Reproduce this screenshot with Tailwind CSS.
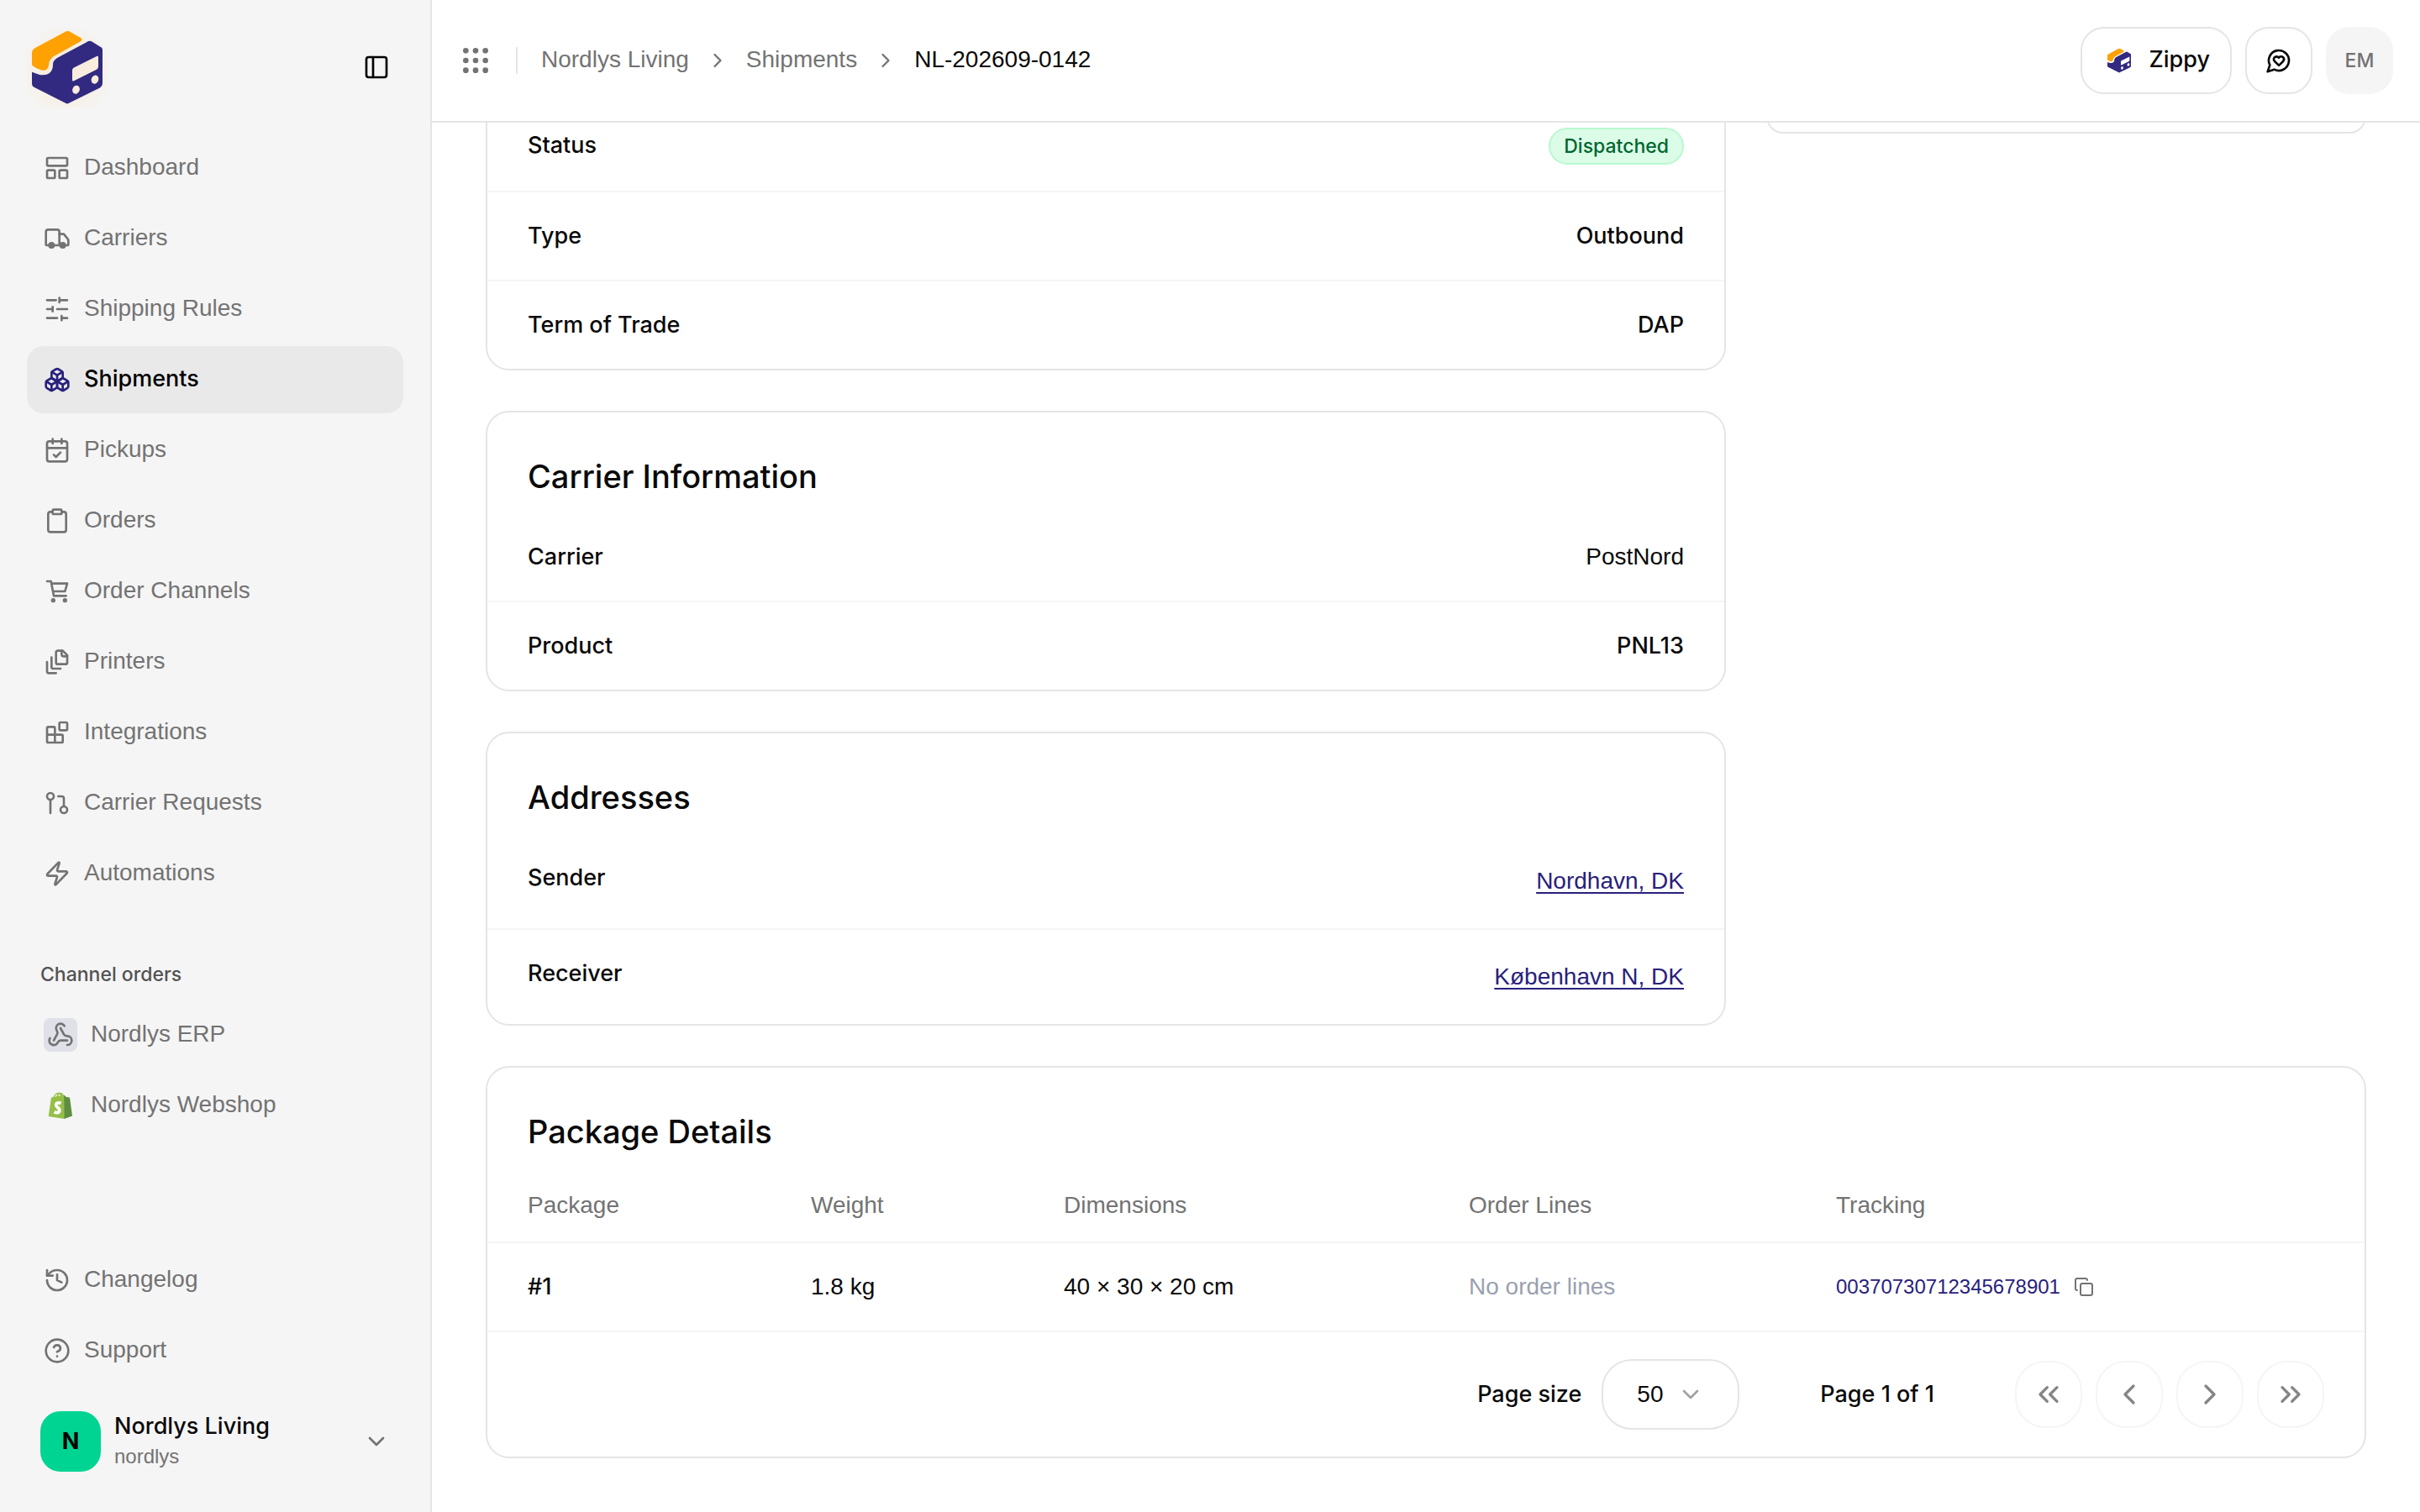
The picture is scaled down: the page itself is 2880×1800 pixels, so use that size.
<!DOCTYPE html>
<html lang="en">
<head>
    <meta charset="UTF-8">
    <meta name="viewport" content="width=device-width, initial-scale=1.0">
    <title>NL-202609-0142</title>
    <script src="https://cdn.jsdelivr.net/npm/@tailwindcss/browser@4"></script>
</head>
<body class="flex h-screen overflow-hidden bg-white font-['Liberation_Sans',Arial,sans-serif] text-[28px] leading-[40px] text-neutral-950">

    <!-- Icon and logo sprites -->
    <svg class="hidden" aria-hidden="true">
        <symbol id="logo" viewBox="0 0 96 96">
            <g transform="translate(0 .5) scale(1 1.045)">
                <path fill="#ffa100" d="M6 29Q6 26 9 24L44 6Q48 3 52 5.500L64 12Q67 14 64 16L32 33Q26 37 26 43Q25 50 18 49Q15 48 12 47L7 44Q6 43 6 42Z"/>
                <path fill="#312a80" d="M71 17Q74 15 77 16L87 22Q90 23 90 26V64Q90 67 87 69L51 86Q48 88 45 86L8 68Q6 67 6 64V51L15 54Q31 56 31 42Q31 38 36 35Z"/>
                <g fill="currentColor">
                    <path d="M54 49Q54 47 56 46L83 33Q85 32 85 34V45Q85 47 83 48L56 61Q54 62 54 60Z"/>
                    <ellipse cx="58.500" cy="71" rx="4.200" ry="5" transform="rotate(28 58.500 71)"/>
                    <ellipse cx="81" cy="59.500" rx="4.200" ry="5" transform="rotate(28 81 59.500)"/>
                </g>
            </g>
        </symbol>
        <symbol id="chevron-right" viewBox="0 0 24 24"><path d="m9 18 6-6-6-6"/></symbol>
        <symbol id="chevron-down" viewBox="0 0 24 24"><path d="m6 9 6 6 6-6"/></symbol>
    </svg>

    <!-- Sidebar -->
    <aside class="flex w-[514px] shrink-0 flex-col border-r-2 border-neutral-200 bg-neutral-100 p-8 text-neutral-500">
        <div class="flex items-center justify-between pr-4">
            <a href="#" aria-label="Home" class="size-24 bg-[radial-gradient(circle_at_50%_55%,#f7ecdd_30%,#f5f5f5_80%)] text-[#f7ecdd]"><svg class="size-full"><use href="#logo"/></svg></a>
            <button aria-label="Toggle sidebar" class="text-black">
                <svg class="size-8" viewBox="0 0 24 24" fill="none" stroke="currentColor" stroke-width="2" stroke-linecap="round" stroke-linejoin="round"><rect width="18" height="18" x="3" y="3" rx="2"/><path d="M9 3v18"/></svg>
            </button>
        </div>

        <nav class="mt-8 flex flex-col gap-1">
            <a href="#" class="flex h-20 items-center gap-4 rounded-[20px] px-5">
                <svg class="size-8" viewBox="0 0 24 24" fill="none" stroke="currentColor" stroke-width="2" stroke-linecap="round" stroke-linejoin="round"><rect width="18" height="7" x="3" y="3" rx="1"/><rect width="7" height="7" x="3" y="14" rx="1"/><rect width="7" height="7" x="14" y="14" rx="1"/></svg>
                <span class="pb-0.5">Dashboard</span>
            </a>
            <a href="#" class="flex h-20 items-center gap-4 rounded-[20px] px-5">
                <svg class="size-8" viewBox="0 0 24 24" fill="none" stroke="currentColor" stroke-width="2" stroke-linecap="round" stroke-linejoin="round"><path d="M14 18V6a2 2 0 0 0-2-2H4a2 2 0 0 0-2 2v11a1 1 0 0 0 1 1h2"/><path d="M15 18H9"/><path d="M19 18h2a1 1 0 0 0 1-1v-3.650a1 1 0 0 0-.22-.624l-3.480-4.350A1 1 0 0 0 17.520 8H14"/><circle cx="17" cy="18" r="2" fill="currentColor"/><circle cx="7" cy="18" r="2" fill="currentColor"/></svg>
                <span class="pb-0.5">Carriers</span>
            </a>
            <a href="#" class="flex h-20 items-center gap-4 rounded-[20px] px-5">
                <svg class="size-8" viewBox="0 0 24 24" fill="none" stroke="currentColor" stroke-width="2" stroke-linecap="round" stroke-linejoin="round"><path d="M3 4h8M14 4h7M14 2v4M3 12h5M8 10v4M12 12h9M3 20h9M16 18v4M16 20h5"/></svg>
                <span class="pb-0.5">Shipping Rules</span>
            </a>
            <a href="#" aria-current="page" class="flex h-20 items-center gap-4 rounded-[20px] bg-[#e9e9e9] px-5 text-black">
                <svg class="size-8 text-[#28217c]" viewBox="0 0 24 24" fill="none" stroke="currentColor" stroke-width="2" stroke-linecap="round" stroke-linejoin="round"><path d="M2.970 12.920A2 2 0 0 0 2 14.630v3.240a2 2 0 0 0 .97 1.710l3 1.800a2 2 0 0 0 2.060 0L12 19v-5.500l-5-3-4.030 2.420Z"/><path d="m7 16.500-4.740-2.850"/><path d="m7 16.500 5-3"/><path d="M7 16.500v5.170"/><path d="M12 13.500V19l3.970 2.380a2 2 0 0 0 2.060 0l3-1.800a2 2 0 0 0 .97-1.710v-3.240a2 2 0 0 0-.97-1.710L17 10.500l-5 3Z"/><path d="m17 16.500-5-3"/><path d="m17 16.500 4.740-2.850"/><path d="M17 16.500v5.170"/><path d="M7.970 4.420A2 2 0 0 0 7 6.130v4.370l5 3 5-3V6.130a2 2 0 0 0-.97-1.710l-3-1.800a2 2 0 0 0-2.060 0l-3 1.800Z"/><path d="M12 8 7.260 5.150"/><path d="m12 8 4.740-2.850"/><path d="M12 13.500V8"/></svg>
                <span class="pb-0.5 font-['Inter'] text-[27px] font-medium">Shipments</span>
            </a>
            <a href="#" class="flex h-20 items-center gap-4 rounded-[20px] px-5">
                <svg class="size-8" viewBox="0 0 24 24" fill="none" stroke="currentColor" stroke-width="2" stroke-linecap="round" stroke-linejoin="round"><path d="M8 2v4M16 2v4"/><rect width="18" height="18" x="3" y="4" rx="2"/><path d="M3 10h18M9 16l2 2 4-4"/></svg>
                <span class="pb-0.5">Pickups</span>
            </a>
            <a href="#" class="flex h-20 items-center gap-4 rounded-[20px] px-5">
                <svg class="size-8" viewBox="0 0 24 24" fill="none" stroke="currentColor" stroke-width="2" stroke-linecap="round" stroke-linejoin="round"><rect width="8" height="4" x="8" y="2" rx="1"/><path d="M16 4h2a2 2 0 0 1 2 2v14a2 2 0 0 1-2 2H6a2 2 0 0 1-2-2V6a2 2 0 0 1 2-2h2"/></svg>
                <span class="pb-0.5">Orders</span>
            </a>
            <a href="#" class="flex h-20 items-center gap-4 rounded-[20px] px-5">
                <svg class="size-8" viewBox="0 0 24 24" fill="none" stroke="currentColor" stroke-width="2" stroke-linecap="round" stroke-linejoin="round"><path d="M3 3h3.500l2.500 13h11M7 5h14l-2 7H8.200"/><circle cx="8.500" cy="20" r="1" fill="currentColor"/><circle cx="19" cy="20" r="1" fill="currentColor"/></svg>
                <span class="pb-0.5">Order Channels</span>
            </a>
            <a href="#" class="flex h-20 items-center gap-4 rounded-[20px] px-5">
                <svg class="size-8" viewBox="0 0 24 24" fill="none" stroke="currentColor" stroke-width="2" stroke-linecap="round" stroke-linejoin="round"><path d="M21 7h-3a2 2 0 0 1-2-2V2"/><path d="M21 6v6.500c0 .8-.7 1.500-1.500 1.500h-7c-.8 0-1.500-.7-1.500-1.500v-9c0-.8.7-1.500 1.500-1.500H17Z"/><path d="M7 8v8.800c0 .3.2.6.4.8.2.2.5.4.8.4H15"/><path d="M3 12v8.800c0 .3.2.6.4.8.2.2.5.4.8.4H11"/></svg>
                <span class="pb-0.5">Printers</span>
            </a>
            <a href="#" class="flex h-20 items-center gap-4 rounded-[20px] px-5">
                <svg class="size-8" viewBox="0 0 24 24" fill="none" stroke="currentColor" stroke-width="2" stroke-linecap="round" stroke-linejoin="round"><rect width="7" height="7" x="14" y="3" rx="1"/><path d="M10 21V8a1 1 0 0 0-1-1H4a1 1 0 0 0-1 1v12a1 1 0 0 0 1 1h12a1 1 0 0 0 1-1v-5a1 1 0 0 0-1-1H3"/></svg>
                <span class="pb-0.5">Integrations</span>
            </a>
            <a href="#" class="flex h-20 items-center gap-4 rounded-[20px] px-5">
                <svg class="size-8" viewBox="0 0 24 24" fill="none" stroke="currentColor" stroke-width="2" stroke-linecap="round" stroke-linejoin="round"><circle cx="18" cy="18" r="3"/><circle cx="6" cy="6" r="3"/><path d="M13 6h3a2 2 0 0 1 2 2v7M6 9v12"/></svg>
                <span class="pb-0.5">Carrier Requests</span>
            </a>
            <a href="#" class="flex h-20 items-center gap-4 rounded-[20px] px-5">
                <svg class="size-8" viewBox="0 0 24 24" fill="none" stroke="currentColor" stroke-width="2" stroke-linecap="round" stroke-linejoin="round"><path d="M4 14a1 1 0 0 1-.78-1.630l9.900-10.200a.5.5 0 0 1 .86.460l-1.920 6.020A1 1 0 0 0 13 10h7a1 1 0 0 1 .78 1.630l-9.900 10.200a.5.5 0 0 1-.86-.46l1.920-6.020A1 1 0 0 0 11 14z"/></svg>
                <span class="pb-0.5">Automations</span>
            </a>
        </nav>

        <h2 class="mt-[60px] px-4 font-['Inter'] text-[23px] font-medium text-neutral-600">Channel orders</h2>
        <nav class="mt-3 flex flex-col gap-1">
            <a href="#" class="flex h-20 items-center gap-4 rounded-[20px] px-5">
                <span class="flex size-10 items-center justify-center rounded-lg bg-[#e0e0e9]">
                    <svg class="size-8" viewBox="0 0 24 24" fill="none" stroke="currentColor" stroke-width="2" stroke-linecap="round" stroke-linejoin="round"><path d="M18 16.980h-5.990c-1.100 0-1.950.94-2.480 1.900A4 4 0 0 1 2 17c.01-.7.2-1.400.57-2"/><path d="m6 17 3.130-5.780c.53-.97.1-2.180-.5-3.100a4 4 0 1 1 6.890-4.060"/><path d="m12 6 3.130 5.730C15.660 12.700 16.900 13 18 13a4 4 0 0 1 0 8"/></svg>
                </span>
                <span class="pb-0.5">Nordlys ERP</span>
            </a>
            <a href="#" class="flex h-20 items-center gap-4 rounded-[20px] px-5">
                <svg class="h-8 w-10" viewBox="0 0 40 32">
                    <path fill="none" stroke="#95bf47" stroke-width="1.500" d="M12 6.500C13 3 16 1 18 1.500S21 3 21 6M16 6.500c0-3 2-5.500 4-5s3 1.500 3 3.500"/>
                    <path fill="#95bf47" d="M9 6.500 24 3.500 25 32 5.700 29Z"/>
                    <path fill="#5e8e3e" d="m24 3.500 3 2.500 4 .5 3 22L24.500 32Z"/>
                    <path fill="none" stroke="#fff" stroke-width="3.800" d="M20.500 13.500c-2.500-1.200-5.500-.8-5.900 1.800-.4 2.900 4.600 3.300 4.200 6.600-.4 3-3.500 3.500-6.200 1.700"/>
                </svg>
                <span class="pb-0.5">Nordlys Webshop</span>
            </a>
        </nav>

        <nav class="mt-auto flex flex-col gap-1">
            <a href="#" class="flex h-20 items-center gap-4 rounded-[20px] px-5">
                <svg class="size-8" viewBox="0 0 24 24" fill="none" stroke="currentColor" stroke-width="2" stroke-linecap="round" stroke-linejoin="round"><path d="M3 12a9 9 0 1 0 9-9 9.750 9.750 0 0 0-6.740 2.740L3 8"/><path d="M3 3v5h5M12 7v5l4 2"/></svg>
                <span class="pb-0.5">Changelog</span>
            </a>
            <a href="#" class="flex h-20 items-center gap-4 rounded-[20px] px-5">
                <svg class="size-8" viewBox="0 0 24 24" fill="none" stroke="currentColor" stroke-width="2" stroke-linecap="round" stroke-linejoin="round"><circle cx="12" cy="12" r="10"/><path d="M9.090 9a3 3 0 0 1 5.830 1c0 2-3 3-3 3M12 17h.01"/></svg>
                <span class="pb-0.5">Support</span>
            </a>
        </nav>

        <button class="mt-4 flex h-26 items-center gap-4 px-4 text-left">
            <span class="flex size-18 items-center justify-center rounded-3xl bg-[#00d492] font-['Inter'] text-[27px] font-bold text-black">N</span>
            <span class="flex grow flex-col">
                <span class="font-['Inter'] text-[27px] leading-[36px] font-medium text-neutral-950">Nordlys Living</span>
                <span class="text-[24px] leading-[36px]">nordlys</span>
            </span>
            <svg class="size-8" fill="none" stroke="currentColor" stroke-width="2" stroke-linecap="round" stroke-linejoin="round"><use href="#chevron-down"/></svg>
        </button>
    </aside>

    <div class="flex min-w-0 grow flex-col">
        <!-- Top bar -->
        <header class="flex h-[146px] shrink-0 items-center justify-between border-b-2 border-neutral-200 px-8">
            <div class="flex items-center gap-7">
                <button aria-label="Apps" class="text-neutral-500">
                    <svg class="size-10" viewBox="0 0 24 24" fill="currentColor"><circle cx="5" cy="5" r="2"/><circle cx="12" cy="5" r="2"/><circle cx="19" cy="5" r="2"/><circle cx="5" cy="12" r="2"/><circle cx="12" cy="12" r="2"/><circle cx="19" cy="12" r="2"/><circle cx="5" cy="19" r="2"/><circle cx="12" cy="19" r="2"/><circle cx="19" cy="19" r="2"/></svg>
                </button>
                <div class="h-8 w-0.5 bg-neutral-200"></div>
                <nav aria-label="Breadcrumb" class="flex items-center gap-5 text-neutral-500">
                    <a href="#" class="pb-0.5">Nordlys Living</a>
                    <svg class="size-7" fill="none" stroke="currentColor" stroke-width="2" stroke-linecap="round" stroke-linejoin="round"><use href="#chevron-right"/></svg>
                    <a href="#" class="pb-0.5">Shipments</a>
                    <svg class="size-7" fill="none" stroke="currentColor" stroke-width="2" stroke-linecap="round" stroke-linejoin="round"><use href="#chevron-right"/></svg>
                    <span aria-current="page" class="pb-0.5 text-neutral-950">NL-202609-0142</span>
                </nav>
            </div>
            <div class="flex items-center gap-4">
                <button class="flex h-20 items-center gap-5 rounded-[28px] border-2 border-neutral-200 pr-6 pl-7 font-['Inter'] text-[27px] font-medium">
                    <svg class="size-8 text-white"><use href="#logo"/></svg>
                    <span class="pb-0.5 text-neutral-950">Zippy</span>
                </button>
                <button aria-label="Feedback" class="flex size-20 items-center justify-center rounded-[28px] border-2 border-neutral-200">
                    <svg class="size-8" viewBox="0 0 24 24" fill="none" stroke="currentColor" stroke-width="2" stroke-linecap="round" stroke-linejoin="round"><path d="M7.900 20A9 9 0 1 0 4 16.100L2 22Z"/><path d="M15.800 9.200a2.500 2.500 0 0 0-3.500 0l-.3.400-.35-.3a2.420 2.420 0 1 0-3.200 3.600l3.600 3.500 3.600-3.500c1.200-1.200 1.100-2.700.2-3.700"/></svg>
                </button>
                <button class="size-20 rounded-[28px] bg-neutral-100 font-['Inter'] text-[23px] font-medium text-neutral-500">EM</button>
            </div>
        </header>

        <!-- Scrolled content, aligned to the end of the page -->
        <main class="flex min-h-0 grow flex-col justify-end overflow-hidden px-16 pb-16">
            <div class="grid grid-cols-3 items-start gap-12">
                <div class="col-span-2 flex flex-col gap-12">
                    <section class="rounded-[28px] border-2 border-neutral-200">
                        <dl class="divide-y-2 divide-neutral-100">
                            <div class="flex h-[108px] items-center justify-between px-12">
                                <dt class="pb-0.5 font-['Inter'] text-[27px] font-medium">Status</dt>
                                <dd class="rounded-full border-2 border-green-200 bg-green-100 px-4 font-['Inter'] text-[23px] font-medium text-green-800">Dispatched</dd>
                            </div>
                            <div class="flex justify-between px-12 py-8 font-['Inter'] text-[27px] font-medium">
                                <dt>Type</dt>
                                <dd>Outbound</dd>
                            </div>
                            <div class="flex justify-between px-12 py-8 font-['Inter'] text-[27px] font-medium">
                                <dt>Term of Trade</dt>
                                <dd>DAP</dd>
                            </div>
                        </dl>
                    </section>

                    <section class="rounded-[28px] border-2 border-neutral-200">
                        <h2 class="px-12 pt-12 pb-4 font-['Inter'] text-[38px] leading-[56px] font-medium">Carrier Information</h2>
                        <dl class="divide-y-2 divide-neutral-100">
                            <div class="flex justify-between px-12 py-8">
                                <dt class="font-['Inter'] text-[27px] font-medium">Carrier</dt>
                                <dd>PostNord</dd>
                            </div>
                            <div class="flex justify-between px-12 py-8 font-['Inter'] text-[27px] font-medium">
                                <dt>Product</dt>
                                <dd>PNL13</dd>
                            </div>
                        </dl>
                    </section>

                    <section class="rounded-[28px] border-2 border-neutral-200">
                        <h2 class="px-12 pt-12 pb-4 font-['Inter'] text-[38px] leading-[56px] font-medium">Addresses</h2>
                        <dl class="divide-y-2 divide-neutral-100">
                            <div class="flex justify-between px-12 py-8">
                                <dt class="font-['Inter'] text-[27px] font-medium">Sender</dt>
                                <dd class="leading-[48px]"><a href="#" class="text-[#28217c] underline underline-offset-4">Nordhavn, DK</a></dd>
                            </div>
                            <div class="flex justify-between px-12 py-8">
                                <dt class="font-['Inter'] text-[27px] font-medium">Receiver</dt>
                                <dd class="leading-[48px]"><a href="#" class="text-[#28217c] underline underline-offset-4">København N, DK</a></dd>
                            </div>
                        </dl>
                    </section>
                </div>

                <section class="h-10 rounded-[28px] border-2 border-neutral-200"></section>
            </div>

            <section class="mt-12 rounded-[28px] border-2 border-neutral-200">
                <h2 class="px-12 pt-12 pb-4 font-['Inter'] text-[38px] leading-[56px] font-medium">Package Details</h2>
                <table class="w-full table-fixed text-left">
                    <colgroup>
                        <col class="w-[337px]"><col class="w-[301px]"><col class="w-[482px]"><col class="w-[437px]"><col>
                    </colgroup>
                    <thead>
                        <tr class="h-[88px] border-b-2 border-neutral-100 text-neutral-500">
                            <th class="pl-12 font-normal">Package</th>
                            <th class="pl-12 font-normal">Weight</th>
                            <th class="pl-12 font-normal">Dimensions</th>
                            <th class="pl-12 font-normal">Order Lines</th>
                            <th class="pl-12 font-normal">Tracking</th>
                        </tr>
                    </thead>
                    <tbody>
                        <tr class="h-[106px] border-b-2 border-neutral-100">
                            <td class="pl-12 font-['Inter'] text-[27px] font-medium">#1</td>
                            <td class="pl-12">1.8 kg</td>
                            <td class="pl-12">40 × 30 × 20 cm</td>
                            <td class="pl-12 text-gray-400">No order lines</td>
                            <td class="pl-12">
                                <div class="flex items-center gap-4 text-[24px]">
                                    <a href="#" class="text-[#28217c]">00370730712345678901</a>
                                    <button aria-label="Copy tracking number" class="text-neutral-500">
                                        <svg class="size-6" viewBox="0 0 24 24" fill="none" stroke="currentColor" stroke-width="2" stroke-linecap="round" stroke-linejoin="round"><rect width="14" height="14" x="8" y="8" rx="2"/><path d="M4 16a2 2 0 0 1-2-2V4a2 2 0 0 1 2-2h10a2 2 0 0 1 2 2"/></svg>
                                    </button>
                                </div>
                            </td>
                        </tr>
                    </tbody>
                </table>

                <div class="flex items-center justify-end px-12 py-8 font-['Inter'] text-[27px] font-medium">
                    <label for="page-size">Page size</label>
                    <div class="relative ml-6">
                        <select id="page-size" class="h-21 w-41 appearance-none rounded-[36px] border-2 border-neutral-200 pl-10 font-['Liberation_Sans'] text-[28px] font-normal">
                            <option>50</option>
                        </select>
                        <svg class="pointer-events-none absolute top-6.5 right-10.5 size-8 text-neutral-400" fill="none" stroke="currentColor" stroke-width="2" stroke-linecap="round" stroke-linejoin="round"><use href="#chevron-down"/></svg>
                    </div>
                    <span class="mx-24">Page 1 of 1</span>
                    <div class="flex gap-4 text-[#858585]">
                        <button aria-label="First page" class="flex size-20 items-center justify-center rounded-[36px] border-2 border-neutral-100">
                            <svg class="size-10" viewBox="0 0 24 24" fill="none" stroke="currentColor" stroke-width="2" stroke-linecap="round" stroke-linejoin="round"><path d="m11 17-5-5 5-5M18 17l-5-5 5-5"/></svg>
                        </button>
                        <button aria-label="Previous page" class="flex size-20 items-center justify-center rounded-[36px] border-2 border-neutral-100">
                            <svg class="size-10" viewBox="0 0 24 24" fill="none" stroke="currentColor" stroke-width="2" stroke-linecap="round" stroke-linejoin="round"><path d="m15 18-6-6 6-6"/></svg>
                        </button>
                        <button aria-label="Next page" class="flex size-20 items-center justify-center rounded-[36px] border-2 border-neutral-100">
                            <svg class="size-10" viewBox="0 0 24 24" fill="none" stroke="currentColor" stroke-width="2" stroke-linecap="round" stroke-linejoin="round"><path d="m9 18 6-6-6-6"/></svg>
                        </button>
                        <button aria-label="Last page" class="flex size-20 items-center justify-center rounded-[36px] border-2 border-neutral-100">
                            <svg class="size-10" viewBox="0 0 24 24" fill="none" stroke="currentColor" stroke-width="2" stroke-linecap="round" stroke-linejoin="round"><path d="m6 17 5-5-5-5M13 17l5-5-5-5"/></svg>
                        </button>
                    </div>
                </div>
            </section>
        </main>
    </div>
</body>
</html>
